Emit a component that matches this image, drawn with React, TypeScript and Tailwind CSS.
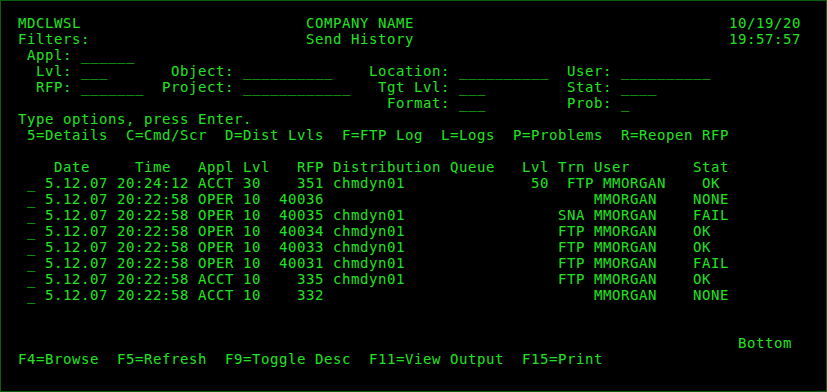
import React from 'react';

// each screen row is a list of [column, text] pieces on a 9px character grid
type Piece = [number, string];

const ROWS: Piece[][] = [
  [[0, 'MDCLWSL'], [32, 'COMPANY NAME'], [79, '10/19/20']],
  [[0, 'Filters:'], [32, 'Send History'], [79, '19:57:57']],
  [[1, 'Appl:'], [7, '______']],
  [[2, 'Lvl:'], [7, '___'], [17, 'Object:'], [25, '__________'], [39, 'Location:'], [49, '__________'], [61, 'User:'], [67, '__________']],
  [[2, 'RFP:'], [7, '_______'], [16, 'Project:'], [25, '____________'], [40, 'Tgt Lvl:'], [49, '___'], [61, 'Stat:'], [67, '____']],
  [[41, 'Format:'], [49, '___'], [61, 'Prob:'], [67, '_']],
  [[0, 'Type options, press Enter.']],
  [[1, '5=Details  C=Cmd/Scr  D=Dist Lvls  F=FTP Log  L=Logs  P=Problems  R=Reopen RFP']],
  [],
  [[4, 'Date'], [13, 'Time'], [20, 'Appl'], [25, 'Lvl'], [31, 'RFP'], [35, 'Distribution Queue'], [56, 'Lvl'], [60, 'Trn'], [64, 'User'], [75, 'Stat']],
  [[1, '_'], [3, '5.12.07'], [11, '20:24:12'], [20, 'ACCT'], [25, '30'], [31, '351'], [35, 'chmdyn01'], [57, '50'], [61, 'FTP'], [65, 'MMORGAN'], [76, 'OK']],
  [[1, '_'], [3, '5.12.07'], [11, '20:22:58'], [20, 'OPER'], [25, '10'], [29, '40036'], [64, 'MMORGAN'], [75, 'NONE']],
  [[1, '_'], [3, '5.12.07'], [11, '20:22:58'], [20, 'OPER'], [25, '10'], [29, '40035'], [35, 'chmdyn01'], [60, 'SNA'], [64, 'MMORGAN'], [75, 'FAIL']],
  [[1, '_'], [3, '5.12.07'], [11, '20:22:58'], [20, 'OPER'], [25, '10'], [29, '40034'], [35, 'chmdyn01'], [60, 'FTP'], [64, 'MMORGAN'], [75, 'OK']],
  [[1, '_'], [3, '5.12.07'], [11, '20:22:58'], [20, 'OPER'], [25, '10'], [29, '40033'], [35, 'chmdyn01'], [60, 'FTP'], [64, 'MMORGAN'], [75, 'OK']],
  [[1, '_'], [3, '5.12.07'], [11, '20:22:58'], [20, 'OPER'], [25, '10'], [29, '40031'], [35, 'chmdyn01'], [60, 'FTP'], [64, 'MMORGAN'], [75, 'FAIL']],
  [[1, '_'], [3, '5.12.07'], [11, '20:22:58'], [20, 'ACCT'], [25, '10'], [31, '335'], [35, 'chmdyn01'], [60, 'FTP'], [64, 'MMORGAN'], [75, 'OK']],
  [[1, '_'], [3, '5.12.07'], [11, '20:22:58'], [20, 'ACCT'], [25, '10'], [31, '332'], [64, 'MMORGAN'], [75, 'NONE']],
  [],
  [],
  [[80, 'Bottom']],
  [[0, 'F4=Browse  F5=Refresh  F9=Toggle Desc  F11=View Output  F15=Print']],
];

function line(pieces: Piece[]) {
  let s = '';
  for (const [col, text] of pieces) {
    s = s.padEnd(col, ' ') + text;
  }
  return s;
}

export default function App() {
  return (
    <div className="w-[827px] h-[392px] bg-black border border-[#0b5e0b] overflow-hidden">
      <pre
        className="m-0 pl-[17px] pt-[14px] text-[14px] leading-[16px] tracking-[0.572px] text-[#22e322]"
        style={{ fontFamily: '"DejaVu Sans Mono", "Liberation Mono", monospace' }}
      >
        {ROWS.map((r, i) => (
          <div key={i} className="h-[16px] whitespace-pre">
            {line(r)}
          </div>
        ))}
      </pre>
    </div>
  );
}
